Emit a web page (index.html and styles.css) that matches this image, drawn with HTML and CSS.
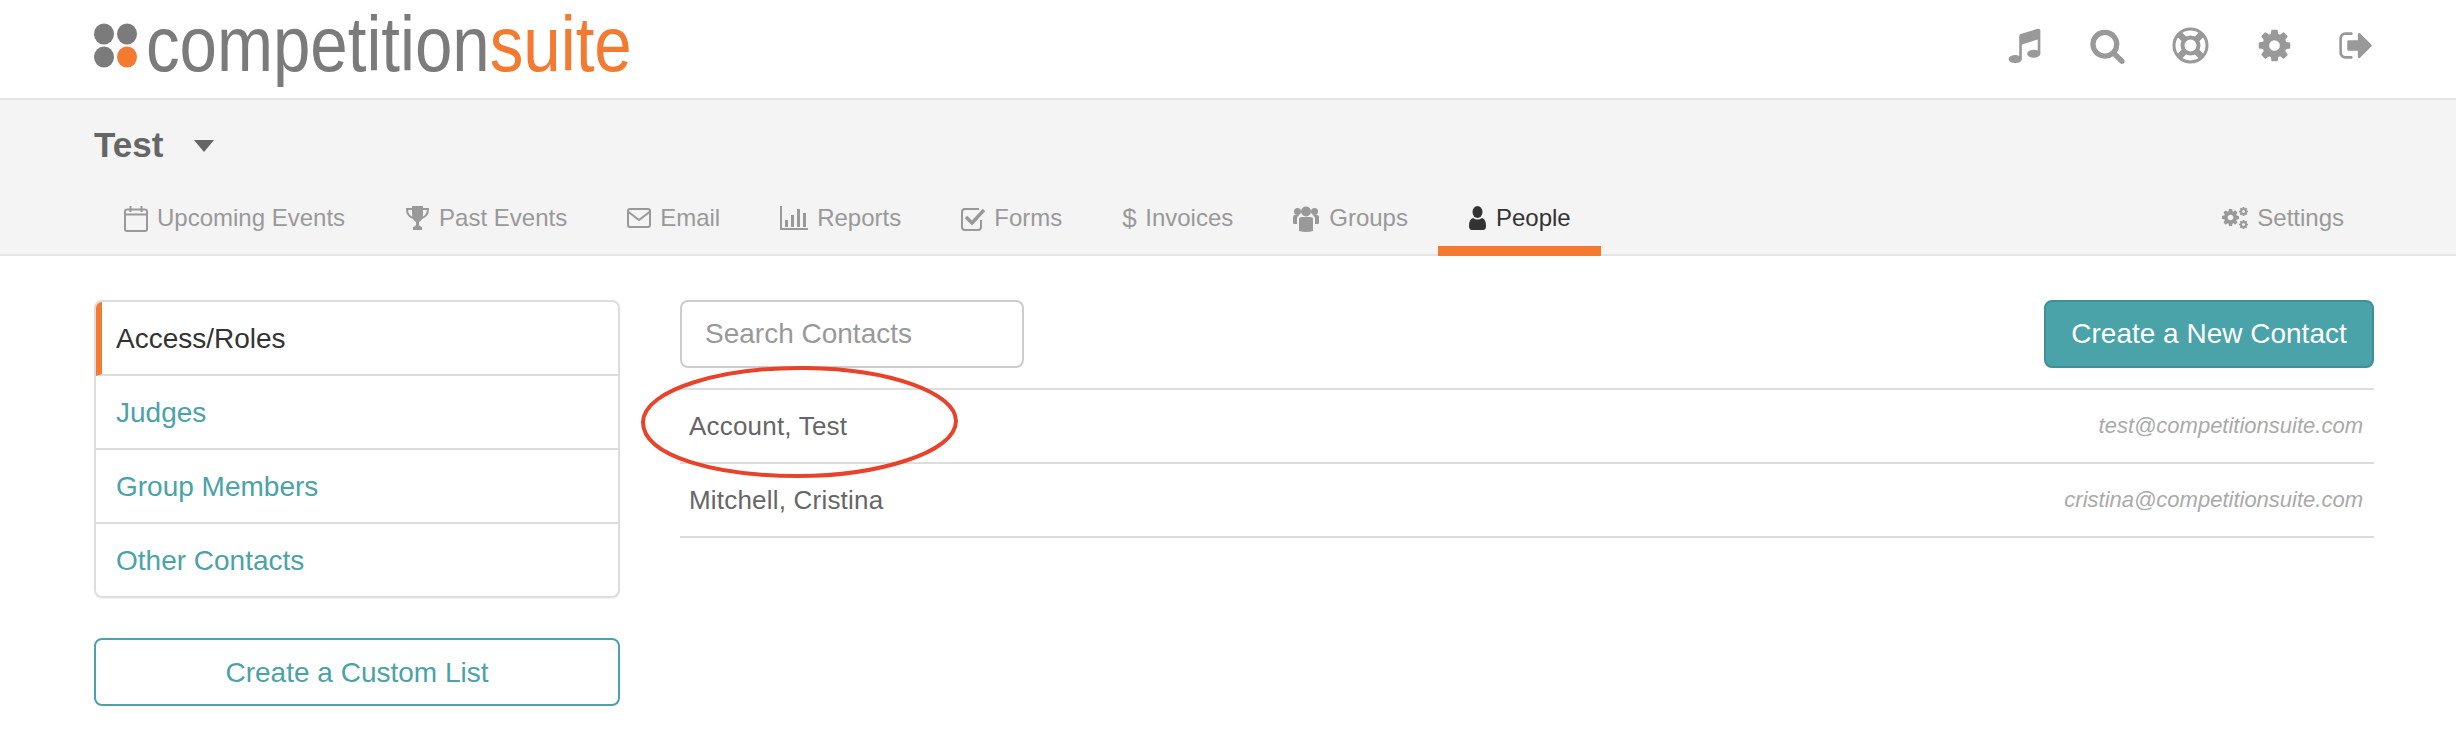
FILE: index.html
```html
<!DOCTYPE html>
<html lang="en">
<head>
    <meta charset="UTF-8">
    <meta name="viewport" content="width=device-width, initial-scale=1.0">
    <title>People</title>
    <link rel="stylesheet" href="styles.css">
</head>
<body>
    <svg class="defs" aria-hidden="true">
        <symbol id="cog" viewBox="128 128 1536 1536">
            <path d="M1152 896q0-106-75-181t-181-75-181 75-75 181 75 181 181 75 181-75 75-181zm512-109v222q0 12-8 23t-20 13l-185 28q-19 54-39 91 35 50 107 138 10 12 10 25t-9 23q-27 37-99 108t-94 71q-12 0-26-9l-138-108q-44 23-91 38-16 136-29 186-7 28-36 28h-222q-14 0-24.5-8.5t-11.5-21.5l-28-184q-49-16-90-37l-141 107q-10 9-25 9-14 0-25-11-126-114-165-168-7-10-7-23 0-12 8-23 15-21 51-66.5t54-70.5q-27-50-41-99l-183-27q-13-2-21-12.5t-8-23.5v-222q0-12 8-23t19-13l186-28q14-46 39-92-40-57-107-138-10-12-10-24 0-10 9-23 26-36 98.5-107.5t94.5-71.5q13 0 26 10l138 107q44-23 91-38 16-136 29-186 7-28 36-28h222q14 0 24.5 8.5t11.5 21.5l28 184q49 16 90 37l142-107q9-9 24-9 13 0 25 10 129 119 165 170 7 8 7 22 0 12-8 23-15 21-51 66.5t-54 70.5q26 50 41 98l183 28q13 2 21 12.5t8 23.5z"/>
        </symbol>
    </svg>

    <!-- Top bar -->
    <header class="topbar">
        <svg class="logo" viewBox="0 0 545 98" role="img" aria-label="competitionsuite">
            <ellipse cx="10" cy="34" rx="10" ry="10.5" fill="#7b7b7b"/>
            <ellipse cx="33" cy="34" rx="10" ry="10.5" fill="#7b7b7b"/>
            <ellipse cx="10" cy="57" rx="10" ry="10.5" fill="#7b7b7b"/>
            <ellipse cx="33" cy="57" rx="10" ry="10.5" fill="#f47a32"/>
            <text class="logo-text" transform="translate(52 70.5) scale(0.862 1)" fill="#7b7b7b">competition<tspan fill="#f47a32">suite</tspan></text>
        </svg>
        <nav class="top-icons">
            <svg viewBox="0 0 1792 1792"><path d="M1664 176v1120q0 50-34 89t-86 60.5-103.5 32-96.5 10.5-96.5-10.5-103.5-32-86-60.5-34-89 34-89 86-60.5 103.5-32 96.5-10.5q105 0 192 39v-537l-768 237v709q0 50-34 89t-86 60.5-103.5 32-96.5 10.5-96.5-10.5-103.5-32-86-60.5-34-89 34-89 86-60.5 103.5-32 96.5-10.5q105 0 192 39v-967q0-31 19-56.5t49-35.5l832-256q12-4 28-4 40 0 68 28t28 68z"/></svg>
            <svg viewBox="0 0 1792 1792"><path d="M1216 832q0-185-131.5-316.5t-316.5-131.5-316.5 131.5-131.5 316.5 131.5 316.5 316.5 131.5 316.5-131.5 131.5-316.5zm512 832q0 52-38 90t-90 38q-54 0-90-38l-343-342q-179 124-399 124-143 0-273.5-55.5t-225-150-150-225-55.5-273.5 55.5-273.5 150-225 225-150 273.5-55.5 273.5 55.5 225 150 150 225 55.5 273.5q0 220-124 399l343 343q37 37 37 90z"/></svg>
            <svg viewBox="-0.5 -0.5 37 37" class="ring">
                <circle cx="18" cy="18" r="16.5" fill="none" stroke-width="3"/>
                <circle cx="18" cy="18" r="8" fill="none" stroke-width="4"/>
                <path d="M12 12L6 6M24 12L30 6M12 24L6 30M24 24L30 30" stroke-width="6.5"/>
            </svg>
            <svg viewBox="0 0 37 37"><use href="#cog" x="3.5" y="2.5" width="32" height="32"/></svg>
            <svg viewBox="0 0 1792 1792"><path d="M704 1440q0 4 1 20t.5 26.5-3 23.5-10 19.5-20.5 6.5h-320q-119 0-203.5-84.5t-84.5-203.5v-704q0-119 84.5-203.5t203.5-84.5h320q13 0 22.5 9.5t9.5 22.5q0 4 1 20t.5 26.5-3 23.5-10 19.5-20.5 6.5h-320q-66 0-113 47t-47 113v704q0 66 47 113t113 47h312l11.5 1 11.5 3 8 5.5 7 9 2 13.5zm928-544q0 26-19 45l-544 544q-19 19-45 19t-45-19-19-45v-288h-448q-26 0-45-19t-19-45v-384q0-26 19-45t45-19h448v-288q0-26 19-45t45-19 45 19l544 544q19 19 19 45z"/></svg>
        </nav>
    </header>

    <!-- Section nav -->
    <section class="subnav">
        <div class="title-row">
            <h1 class="title">Test</h1>
            <span class="caret"></span>
        </div>
        <nav class="tabs">
            <a class="tab">
                <svg class="ti" width="24" height="27" viewBox="0 0 24 27"><rect x="1" y="4.5" width="22" height="21.5" rx="2" class="line"/><path d="M1 9.5h22" class="line"/><path d="M6.5 1v6M17.5 1v6" class="line"/></svg>
                Upcoming Events
            </a>
            <a class="tab">
                <svg class="ti" width="25" height="24" viewBox="-1 0 25 24"><path d="M6 0h11v8q0 6-4 8v3q0 1 3 2v3H7v-3q3-1 3-2v-3q-4-2-4-8z"/><path d="M6 3H1q0 7 6 9M17 3h5q0 7-6 9" class="line"/></svg>
                Past Events
            </a>
            <a class="tab">
                <svg class="ti" width="24" height="20" viewBox="0 0 24 20"><rect x="1" y="1" width="22" height="18" rx="2" class="line"/><path d="M1.500 4l10.500 8 10.500-8" class="line"/></svg>
                Email
            </a>
            <a class="tab">
                <svg class="ti" width="28" height="24" viewBox="0 0 28 24"><path d="M1 0v23h27" class="line"/><path d="M5 14h3v7H5zM11 9h3v12h-3zM17 3h3v18h-3zM23 7h3v14h-3z"/></svg>
                Reports
            </a>
            <a class="tab">
                <svg class="ti" width="24" height="25" viewBox="0 0 24 25"><path d="M20 14v7q0 3-3 3H4q-3 0-3-3V6q0-3 3-3h14" class="line"/><path d="M5 11l6 6L23 4" class="check"/></svg>
                Forms
            </a>
            <a class="tab">
                <span class="dollar">$</span>
                Invoices
            </a>
            <a class="tab">
                <svg class="ti" width="27" height="27" viewBox="0 0 27 27"><circle cx="13" cy="6.500" r="5"/><circle cx="4.500" cy="6.500" r="3.500"/><circle cx="21.500" cy="6.500" r="3.500"/><path d="M6 14q0-2 3-2h8q3 0 3 2v12q-7 2-14 0z"/><path d="M0 12q0-2 2-2h3q1 0 1 1-2 0-2 3v5H1q-1 0-1-1zM26 12q0-2-2-2h-3q-1 0-1 1 2 0 2 3v5h3q1 0 1-1z"/></svg>
                Groups
            </a>
            <a class="tab active">
                <svg class="ti" width="19" height="24" viewBox="-1 0 19 24"><ellipse cx="8.500" cy="6" rx="5" ry="6"/><path d="M0 20q0-7 4-8 4.500 3 9 0 4 1 4 8 0 4-3 4H3q-3 0-3-4z"/></svg>
                People
            </a>
            <a class="tab tab-right">
                <svg class="ti" width="26" height="24" viewBox="0 0 26 24"><use href="#cog" x="0" y="3" width="17" height="17"/><use href="#cog" x="17" y="1" width="9" height="9"/><use href="#cog" x="17" y="14" width="9" height="9"/></svg>
                Settings
            </a>
        </nav>
    </section>

    <!-- Main area -->
    <main class="main">
        <aside class="sidebar">
            <ul class="side-list">
                <li class="side-item current">Access/Roles</li>
                <li class="side-item">Judges</li>
                <li class="side-item">Group Members</li>
                <li class="side-item">Other Contacts</li>
            </ul>
            <button class="btn btn-outline">Create a Custom List</button>
        </aside>

        <div class="content">
            <div class="toolbar">
                <input class="search" type="text" placeholder="Search Contacts">
                <button class="btn btn-solid">Create a New Contact</button>
            </div>
            <ul class="contacts">
                <li class="contact"><span>Account, Test</span><em>test@competitionsuite.com</em></li>
                <li class="contact"><span>Mitchell, Cristina</span><em>cristina@competitionsuite.com</em></li>
            </ul>
            <!-- Red marker drawn over the first row -->
            <svg class="marker" width="320" height="114" viewBox="0 0 320 114"><path d="M3 57C4 24 84 2 166 3C250 4 316 28 316 56C316 88 236 111 158 111C78 111 3 92 3 57Z"/></svg>
        </div>
    </main>
</body>
</html>
```

FILE: styles.css
```css
/* Base Styles */
:root {
    --teal: #4aa3a8;
    --orange: #f47a32;
    --line: #dddddd;
    --muted: #999999;
}

* {
    margin: 0;
    padding: 0;
    box-sizing: border-box;
}

body {
    font-family: "Liberation Sans", Arial, sans-serif;
    background: #ffffff;
    color: #666666;
}

.defs {
    display: none;
}

/* Top bar */
.topbar {
    height: 100px;
    border-bottom: 2px solid #e5e5e5;
    padding: 0 81px 0 94px;
    display: flex;
    align-items: flex-start;
    justify-content: space-between;
}

.logo {
    width: 545px;
    height: 98px;
    display: block;
    overflow: visible;
}

.logo-text {
    font-family: "Liberation Sans", Arial, sans-serif;
    font-size: 78px;
}

.top-icons {
    display: flex;
    gap: 46px;
    padding-top: 27px;
}

.top-icons svg {
    width: 37px;
    height: 37px;
    fill: var(--muted);
    stroke: none;
}

.top-icons .ring {
    stroke: var(--muted);
}

/* Section nav */
.subnav {
    height: 156px;
    background: #f4f4f4;
    border-bottom: 2px solid #e5e5e5;
    padding: 23px 82px 0 94px;
}

.title-row {
    display: flex;
    align-items: center;
    gap: 31px;
    height: 44px;
}

.title {
    font-size: 35px;
    font-weight: 700;
    color: #666666;
}

.caret {
    width: 0;
    height: 0;
    border-left: 10px solid transparent;
    border-right: 10px solid transparent;
    border-top: 12px solid #666666;
    margin-top: 2px;
}

.tabs {
    display: flex;
    margin-top: 23px;
}

.tab {
    display: flex;
    align-items: center;
    gap: 9px;
    height: 66px;
    padding: 0 30px;
    border-bottom: 10px solid transparent;
    font-size: 24px;
    color: var(--muted);
}

.tab.active {
    color: #333333;
    border-bottom-color: var(--orange);
}

.tab-right {
    margin-left: auto;
}

.ti {
    fill: var(--muted);
    flex: none;
}

.tab.active .ti {
    fill: #333333;
}

.ti .line {
    fill: none;
    stroke: var(--muted);
    stroke-width: 2;
}

.ti .check {
    fill: none;
    stroke: var(--muted);
    stroke-width: 3.5;
}

.dollar {
    width: 14px;
    font-size: 26px;
}

/* Main area */
.main {
    display: flex;
    gap: 60px;
    padding: 44px 82px 0 94px;
}

.sidebar {
    width: 526px;
    flex: none;
}

.side-list {
    list-style: none;
    border: 2px solid var(--line);
    border-radius: 8px;
    box-shadow: 0 1px 2px rgba(0, 0, 0, 0.06);
    overflow: hidden;
}

.side-item {
    height: 74px;
    line-height: 74px;
    padding-left: 20px;
    font-size: 28px;
    color: var(--teal);
    border-bottom: 2px solid var(--line);
}

.side-item:last-child {
    height: 72px;
    border-bottom: none;
}

.side-item.current {
    color: #333333;
    border-left: 6px solid var(--orange);
    padding-left: 14px;
}

.btn {
    font-family: inherit;
    font-size: 28px;
    height: 68px;
    border-radius: 8px;
}

.btn-outline {
    display: block;
    width: 100%;
    margin-top: 40px;
    padding-top: 2px;
    background: #ffffff;
    color: var(--teal);
    border: 2px solid var(--teal);
}

.content {
    flex: 1;
    position: relative;
}

.toolbar {
    display: flex;
    justify-content: space-between;
}

.search {
    width: 344px;
    height: 68px;
    border: 2px solid #cccccc;
    border-radius: 8px;
    padding: 0 23px;
    font-family: inherit;
    font-size: 28px;
    outline: none;
}

.search::placeholder {
    color: var(--muted);
    opacity: 1;
}

.btn-solid {
    width: 330px;
    background: var(--teal);
    color: #ffffff;
    border: 2px solid #3f8f94;
}

.contacts {
    list-style: none;
    margin-top: 20px;
    border-top: 2px solid var(--line);
}

.contact {
    display: flex;
    align-items: center;
    justify-content: space-between;
    height: 74px;
    padding: 0 11px 0 9px;
    border-bottom: 2px solid var(--line);
    font-size: 26px;
    letter-spacing: 0.2px;
    color: #666666;
}

.contact em {
    font-size: 22px;
    letter-spacing: 0;
    color: #aaaaaa;
}

.marker {
    position: absolute;
    left: -40px;
    top: 65px;
}

.marker path {
    fill: none;
    stroke: #e8432a;
    stroke-width: 4;
}
```
